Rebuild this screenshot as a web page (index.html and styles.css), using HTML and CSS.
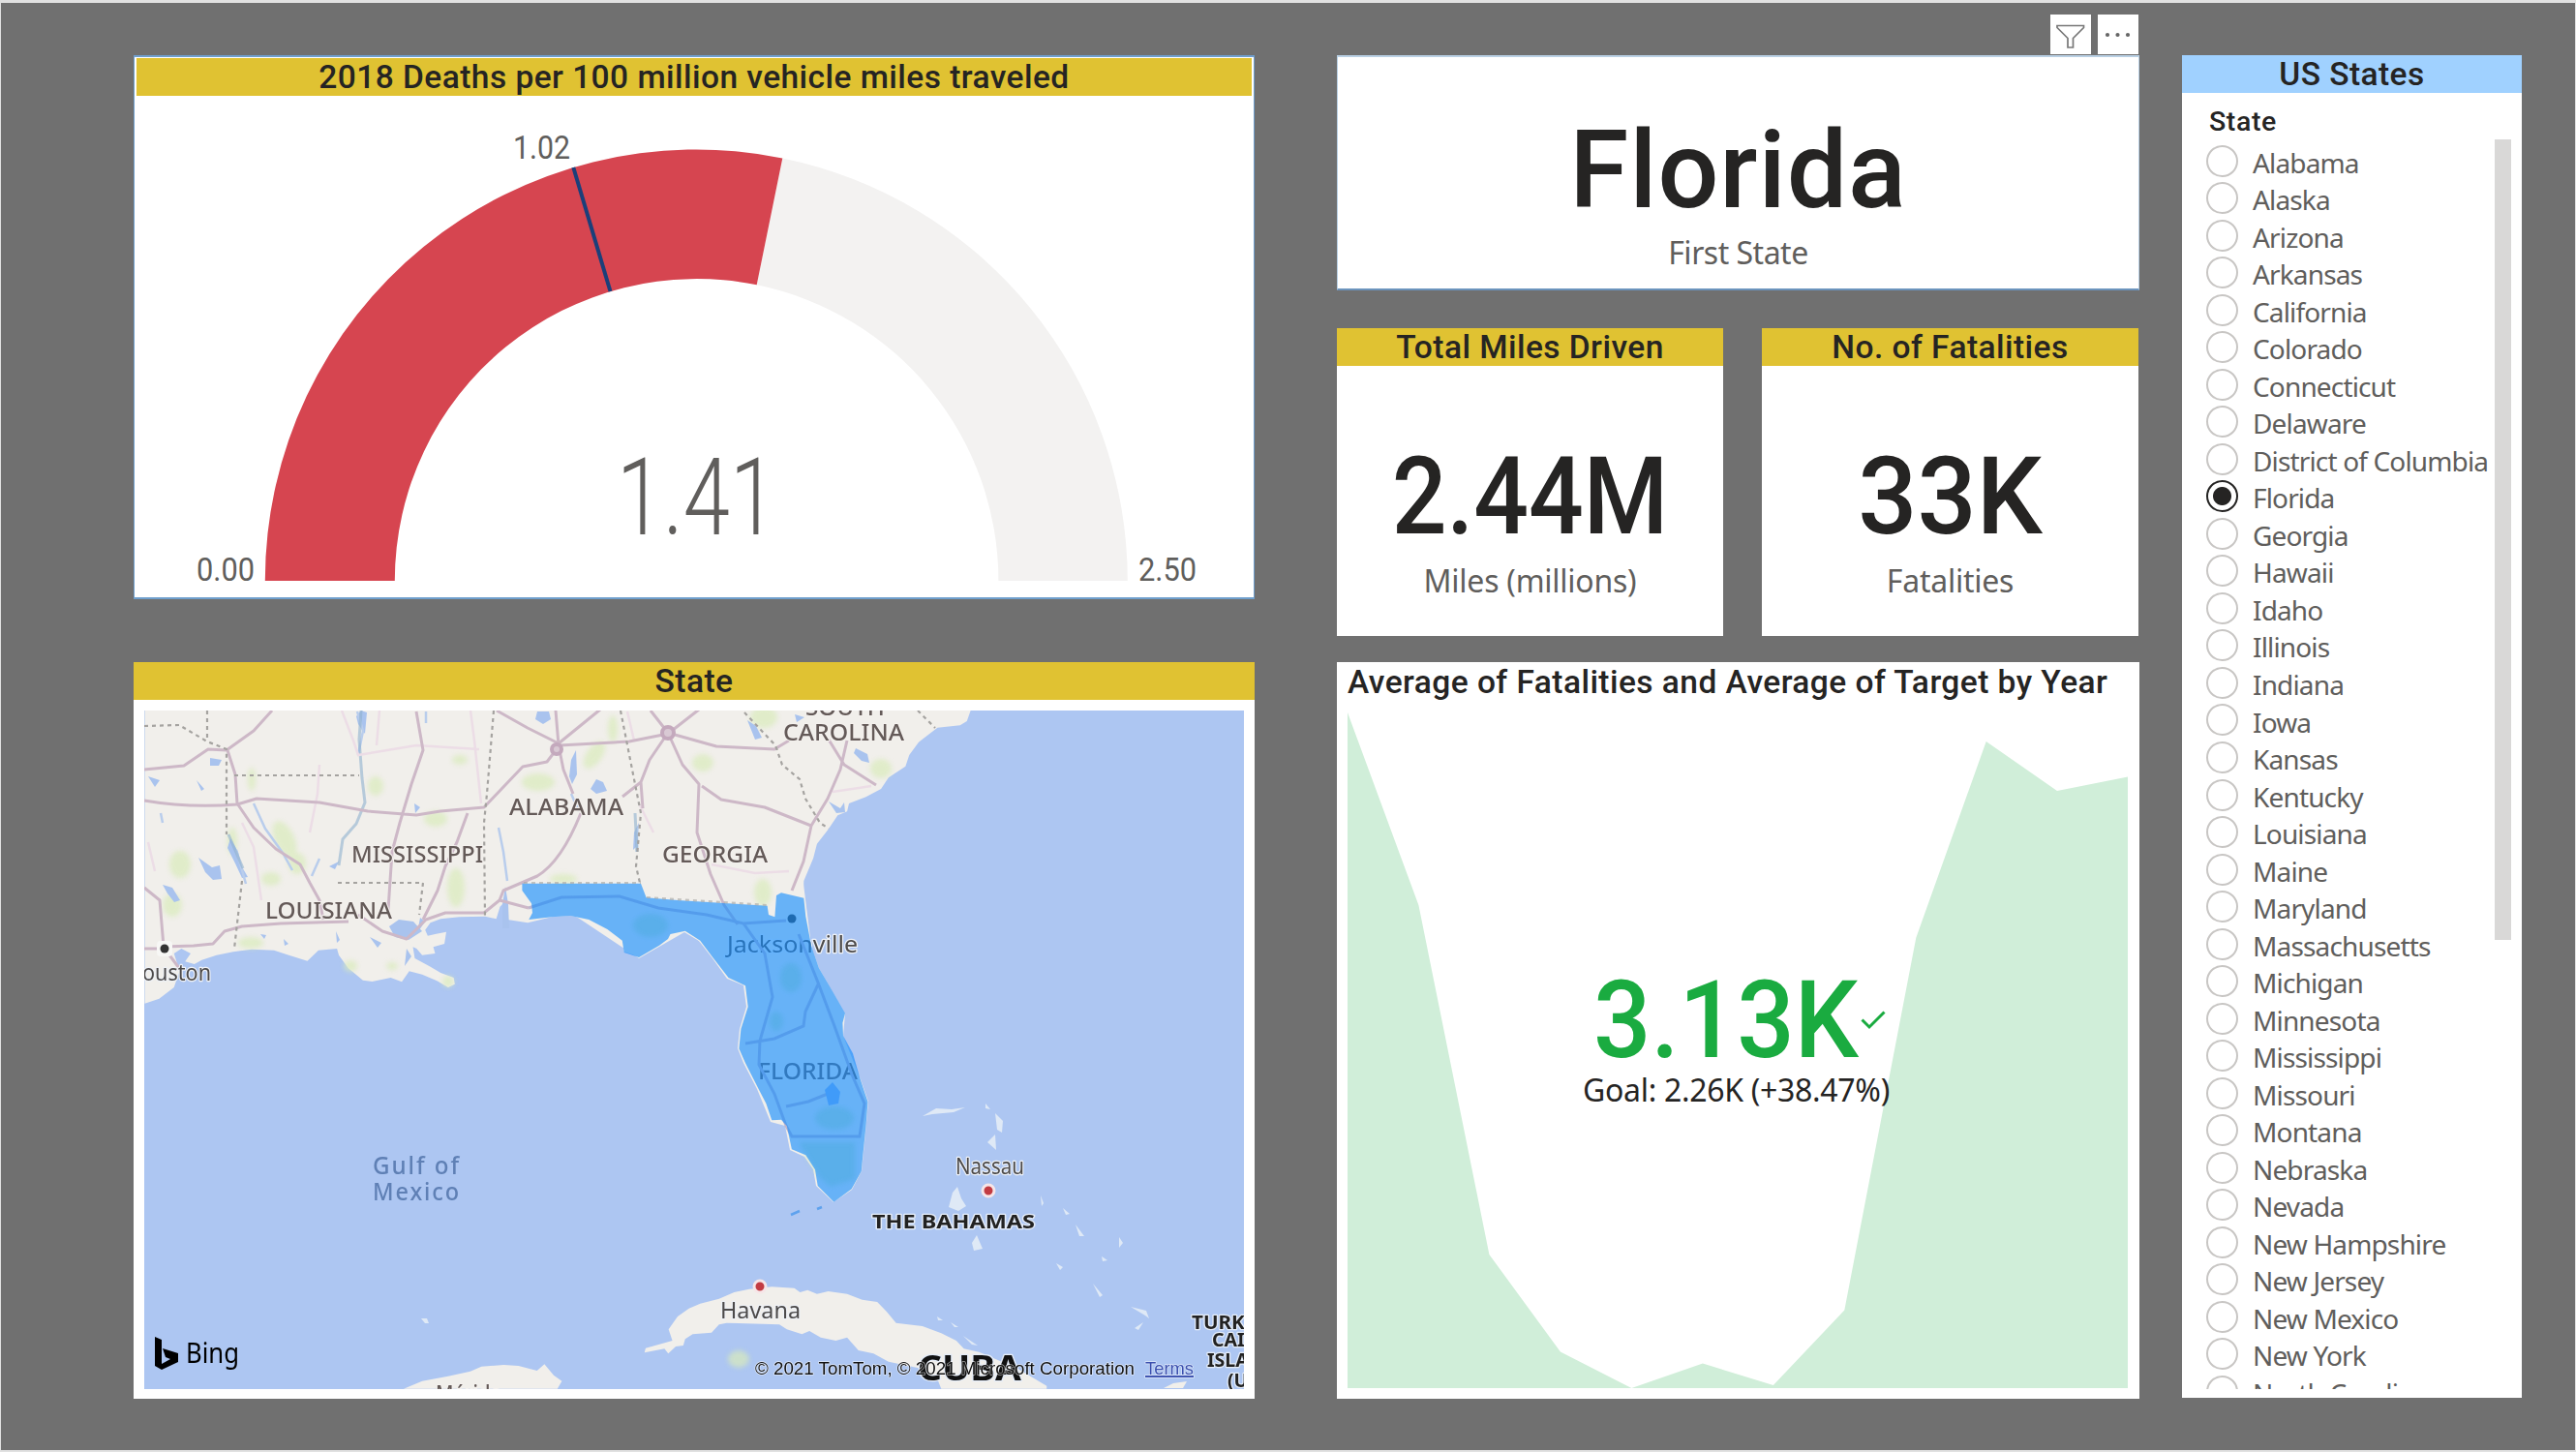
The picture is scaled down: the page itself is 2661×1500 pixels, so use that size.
FILE: index.html
```html
<!DOCTYPE html>
<html lang="en">
<head>
<meta charset="utf-8">
<title>US Traffic Fatalities</title>
<link rel="stylesheet" href="styles.css">
</head>
<body>
<main class="report">
  <div class="col col-left">
    <section class="panel gauge selected">
      <h2 class="band din">2018 Deaths per 100 million vehicle miles traveled</h2>
      <svg class="gauge-chart" viewBox="141 99 1152 517" width="1152" height="517">
        <path fill="#f3f2f1" d="M808.3 163.5A445.5 445.5 0 0 1 1164.8 600H1031.4A312 312 0 0 0 781.7 294.3Z"/>
        <path fill="#d64550" d="M273.8 600A445.5 445.5 0 0 1 808.3 163.5L781.7 294.3A312 312 0 0 0 407.8 600Z"/>
        <path stroke="#1b3f7a" stroke-width="4" d="M592.3 173L630.5 301"/>
        <g class="gauge-label">
          <text x="530" y="164" textLength="59" lengthAdjust="spacingAndGlyphs">1.02</text>
          <text x="203" y="600" textLength="60" lengthAdjust="spacingAndGlyphs">0.00</text>
          <text x="1176" y="600" textLength="60" lengthAdjust="spacingAndGlyphs">2.50</text>
        </g>
        <text class="gauge-value" x="637" y="552" textLength="165" lengthAdjust="spacingAndGlyphs">1.41</text>
      </svg>
    </section>
    <section class="panel map">
      <h2 class="band din">State</h2>
      <svg class="map-view" viewBox="149 734 1136 701" width="1136" height="701">
        <defs><filter id="soft"><feGaussianBlur stdDeviation="2.5"/></filter></defs>
        <rect x="149" y="734" width="1136" height="701" fill="#adc6f2"/>
        <g fill="#f1efeb">
          <!-- Gulf coast -->
          <path transform="translate(130 670) scale(.38265 .33333)" d="M51 192H1700V900L1568 930 1520 875 1470 885 1440 920 1385 955 1345 940 1340 905 1300 870 1250 840 1200 828 1150 832 1085 850 1030 840 1022 785 1010 800 1000 838 970 830 900 832 850 838 822 850 808 872 815 890 835 885 865 878 860 915 830 925 835 945 800 950 785 930 775 925 780 960 820 985 850 1005 885 1020 888 1040 870 1050 840 1030 800 1010 765 1000 745 1033 715 1020 665 1032 640 1028 600 990 575 950 570 930 520 935 490 968 440 950 400 935 340 932 290 940 245 950 205 965 185 978 160 970 175 945 150 930 130 945 145 1000 130 1050 90 1085 51 1100Z"/>
          <!-- Atlantic coast -->
          <path transform="translate(700 670) scale(.38903 .33333)" d="M-100 192H778L768 225 750 238 690 245 640 290 615 330 605 365 560 400 540 435 500 460 455 480 450 505 425 517 400 560 370 605 360 650 335 720 332 800H-100Z"/>
          <path d="M539 913H830L838 977 846 1000 873 1047 871 1070 889 1115 897 1138 894 1170 890 1210 880 1229 861 1242 843 1225 840 1208 831 1195 816 1188 811 1163 796 1159 782 1125 768 1098 762 1083 764 1063 771 1040 768 1018 751 1011 736 990 722 972 707 963 660 990 600 950Z"/>
          <!-- Cuba and Yucatán -->
          <path transform="translate(700 1060) scale(.38903 .33333)" d="M0 900L30 875 60 860 110 845 150 825 190 815 250 808 310 812 325 825 345 818 370 830 400 822 450 830 490 848 530 855 555 885 580 920 650 930 700 952 740 975 760 1000 800 1010 900 1060 980 1115V1124H700L690 1095 640 1060 560 1040 520 1015 480 1005 450 965 420 975 380 965 350 945 330 955 290 940 270 925 130 920 110 925 90 950 40 955 20 970 15 990 -5 993 -25 1015 -35 1000 -88 1012 -85 998 -14 975 -24 940Z"/>
          <path transform="translate(130 1060) scale(.38265 .33333)" d="M750 1124L800 1100 870 1085 930 1070 960 1055 1020 1050 1060 1053 1110 1068 1130 1048 1155 1082 1177 1100 1165 1124Z"/>
          <path d="M1202 1434L1212 1429 1226 1427 1222 1434Z"/>
        </g>
        <!-- forests -->
        <g fill="#d9ebbb" filter="url(#soft)" opacity=".7">
          <ellipse cx="186" cy="893" rx="11" ry="14"/><ellipse cx="178" cy="935" rx="10" ry="12"/>
          <ellipse cx="294" cy="867" rx="10" ry="20" transform="rotate(-25 294 867)"/><ellipse cx="307" cy="892" rx="9" ry="11"/>
          <ellipse cx="280" cy="908" rx="10" ry="7"/><ellipse cx="259" cy="974" rx="13" ry="6"/>
          <ellipse cx="240" cy="869" rx="5" ry="14"/><ellipse cx="260" cy="805" rx="4" ry="12"/>
          <ellipse cx="388" cy="812" rx="8" ry="10"/><ellipse cx="450" cy="846" rx="12" ry="8"/>
          <ellipse cx="475" cy="785" rx="8" ry="5"/><ellipse cx="471" cy="917" rx="9" ry="20"/>
          <ellipse cx="556" cy="808" rx="17" ry="9"/><ellipse cx="614" cy="780" rx="8" ry="16" transform="rotate(35 614 780)"/>
          <ellipse cx="633" cy="753" rx="5" ry="14"/><ellipse cx="582" cy="908" rx="14" ry="5"/>
          <ellipse cx="726" cy="788" rx="11" ry="9"/><ellipse cx="789" cy="741" rx="14" ry="11"/>
          <ellipse cx="910" cy="794" rx="11" ry="10"/><ellipse cx="788" cy="922" rx="9" ry="14"/>
          <ellipse cx="362" cy="998" rx="7" ry="6"/><ellipse cx="463" cy="1014" rx="6" ry="6"/>
          <ellipse cx="763" cy="1404" rx="11" ry="9"/><ellipse cx="405" cy="998" rx="6" ry="4"/>
        </g>
        <!-- lakes and rivers -->
        <g fill="#a9c3ee">
          <path d="M402 957L412 950 427 952 436 962 422 971 408 968Z"/>
          <path d="M238 866l8 14 3 14 7 12-6 1-7-15-8-16z"/><path d="M205 886l14 10 8-2 2 14-9 1-8-8z"/>
          <path d="M168 914l10 3 8 13-6 2-7-9z"/><path d="M153 802l12 4-5 7z"/><path d="M217 783l12 2-3 6-9 0z"/>
          <path d="M555 735h12l2 8-8 5-8-5z"/><path d="M616 805l7 3 4 9-11 3-6-5z"/>
          <path d="M590 785l5-10 1 25-5 10-3-8z"/><path d="M368 740l5-6 6 2-2 22-7-10z"/>
          <path d="M884 773l12 6 2 9-8-2-8-8z"/><path d="M772 744l9 6 6 12-7 2z"/><path d="M856 828l12 7 4-6 1 10-9 1z"/>
          <path d="M519 934l3-18 3 18 1 25-7 0z"/><path d="M655 860l5-10-2 24-4 4z"/><path d="M434 948l5 4-8 12z"/>
          <path d="M347 962l4 9-3 3zM293 970l5 5-4 2zM269 965l6 1-2 4zM340 895l10-5-4 8zM420 980l5 8-7 10zM382 968l12 6-4 5zM821 738l10 3-8 5zM428 830l6 4-5 6zM203 806l8 9-3 2z"/>
          <path fill="none" stroke="#b9cdec" stroke-width="2.500" d="M369 735L375 755 370 780M262 830l12 26 18 25 10 18M330 887l-8 18M515 855l5 25 4 30M590 820l8 18M440 735v12M166 840l2 10M658 855v25M244 878l10 35"/>
          <path fill="none" stroke="#8fb0cf" stroke-width="3" opacity=".6" d="M373 734l-2 30 3 40 3 25-9 22-14 16-4 27M656 840l2 40M236 862l15 35"/>
        </g>
        <!-- minor roads -->
        <g class="minor">
          <path d="M353 734L365 765 370 780 400 775 430 770 495 774M392 734L389 770M486 734L490 765 497 830M660 830L675 860M250 850L262 875 270 930M320 860L328 820 330 790M648 735L655 765M735 893L780 902 815 900M860 818L900 812M160 900L153 870"/>
        </g>
        <!-- highways -->
        <g class="road">
          <path d="M149 795L190 791 215 774 234 775 262 755 281 734M235 775L243 800 245 830 262 855 285 877 310 893 320 912 330 930 334 950"/>
          <path d="M149 827Q195 835 245 831L265 825 330 829 380 838 430 842 455 838 500 834 520 813 540 792 565 787 578 770 650 766 690 758 722 733M430 735L437 775 425 810 413 850 405 880 401 940M483 840L472 870 460 895 452 920 437 950"/>
          <path d="M513 734L545 752 577 768 620 733M574 734L577 770 582 795 592 820M600 840Q580 890 555 905L520 920 516 930 500 943 460 943 440 950 420 970 395 962 370 945M516 930L546 938"/>
          <path d="M672 734L690 757 671 785 662 808 643 823M690 757L705 790 722 810 720 860 734 903 748 935 762 955M725 812L745 826 790 834 838 853M690 757L740 771 800 774 815 765M662 808L664 835M856 764L872 790 905 811M875 765L868 795 855 825 838 853 830 890 818 920M149 917L165 930 169 978 200 977 220 975 232 962 250 957 290 954 360 952M149 980H170L185 1000"/>
        </g>
        <circle class="knot" cx="690" cy="757" r="6"/><circle class="knot" cx="575" cy="774" r="5"/>
        <!-- state lines -->
        <path class="border" d="M149 750L185 749 214 766 234 774V862M214 734V766M242 801H371M349 912H437L433 945M510 734L503 820 500 850 501 948M641 734L656 810 662 840 657 895 661 912M250 910L242 980M769 736L801 770 808 790 826 805 832 825 847 850 856 856M948 734L966 752"/>
        <g class="state-name">
          <text x="526" y="842" textLength="118" lengthAdjust="spacingAndGlyphs">ALABAMA</text>
          <text x="363" y="891" textLength="136" lengthAdjust="spacingAndGlyphs">MISSISSIPPI</text>
          <text x="274" y="949" textLength="131" lengthAdjust="spacingAndGlyphs">LOUISIANA</text>
          <text x="684" y="891" textLength="109" lengthAdjust="spacingAndGlyphs">GEORGIA</text>
          <text x="832" y="739" textLength="82" lengthAdjust="spacingAndGlyphs">SOUTH</text>
          <text x="809" y="765" textLength="125" lengthAdjust="spacingAndGlyphs">CAROLINA</text>
          <text x="783" y="1115" textLength="103" lengthAdjust="spacingAndGlyphs">FLORIDA</text>
          <text x="450" y="1448" textLength="68" lengthAdjust="spacingAndGlyphs">Mérida</text>
        </g>
        <g class="city">
          <text x="131" y="1013" textLength="87" lengthAdjust="spacingAndGlyphs">Houston</text>
          <text x="751" y="984" textLength="135" lengthAdjust="spacingAndGlyphs">Jacksonville</text>
          <text x="987" y="1213" textLength="71" lengthAdjust="spacingAndGlyphs">Nassau</text>
          <text x="744" y="1362" textLength="83" lengthAdjust="spacingAndGlyphs">Havana</text>
        </g>
        <rect x="162" y="972" width="16" height="16" rx="4" fill="#f7f7f5"/><circle cx="170" cy="980" r="4.5" fill="#333"/>
        <circle cx="818" cy="949" r="4.5" fill="#333"/>
        <!-- Florida highlight -->
        <g class="fl-road"><path d="M546 938L580 927 640 926 680 938 730 945 768 954 812 951M768 954L790 985 798 1030 785 1075 784 1100 800 1130 812 1163 818 1174H888L893 1140 880 1110 862 1060 845 1015 825 965M846 1015L832 1045 830 1060 800 1073 770 1078M812 1143L835 1138 855 1130"/></g>
        <g fill="#b7e0b0" filter="url(#soft)" opacity=".6"><path d="M825 1180h58v38l-25 8-12-10z"/><ellipse cx="817" cy="1010" rx="11" ry="15"/><ellipse cx="672" cy="956" rx="18" ry="12"/><ellipse cx="862" cy="1155" rx="20" ry="12"/><ellipse cx="802" cy="1055" rx="7" ry="10"/></g>
        <path fill="#8db3ee" d="M852 1126l8-8 8 10-2 12-10 2z"/>
        <path fill="#118dff" fill-opacity=".62" d="M539.4 912.7H662L667.6 927.3 700 930 792.6 935.7 794 945 800.4 947.3 802 925 807 922.3 830.3 927.7 832.3 946.7 838 976.7 845.9 1000 859.5 1023.3 873 1046.7 870.4 1056.7 871 1070 881 1088.3 888.7 1115 896.5 1138.3 894.5 1163.3 891.4 1193.3 889.8 1210 879.7 1228.3 861.4 1241.7 844.7 1225 842 1208.3 832.3 1193.3 817.9 1187.3 812.8 1163.3 807 1156.7 797.3 1157.3 791.4 1140 783.6 1125 770 1098.3 763.4 1083.3 765.4 1063 772.7 1040 770 1018.3 752.5 1010 737 990 723.3 971.7 707.8 961.7 692.5 965 690 970 681 976.7 660 989 644.7 984 642.8 971.7 627.4 960 608.3 950 589.2 946 570 947.3 546.3 950 550 943 549 933.3 539.4 920Z"/>
        <path class="border" stroke-opacity=".6" d="M541 912H662M668 927L792 935"/>
        <path stroke="#5ea2ee" stroke-width="2.5" d="M817 1255l9-4M844 1249l5-2"/>
        <!-- islands -->
        <g fill="#dfe9f6">
          <path d="M953 1153l14-8 16 1 14-2-12 5-22 2zM1018 1140l5 6-5-1zM1028 1150l8 8-1 12-5-3zM1020 1180l8-8 1 16zM984 1232l5-6 4 12 5 8-8 5-10-4zM1004 1284l5-8 6 14-9 2zM1075 1235l3 8-2 3zM1098 1248l7 6-4 1zM1111 1265l9 12-5 0zM1156 1278l4 6-4 5zM1091 1305l7 4-3 3zM1120 1308l9 18 10 12-3 2zM1138 1298l6 4-5 1zM1168 1350l16 4 3 8-4-3zM1181 1366l-5 8-4-2zM968 1360l6 4-5 0zM982 1366l8 5-4 0zM995 1380l15 10-6-1zM435 1362l6 0 2 5-4 0z"/>
        </g>
        <circle class="capital" cx="1021" cy="1230" r="6"/><circle class="capital" cx="785" cy="1329" r="6"/>
        <g class="sea"><text x="385" y="1213" textLength="91" lengthAdjust="spacingAndGlyphs">Gulf of</text><text x="385" y="1240" textLength="91" lengthAdjust="spacingAndGlyphs">Mexico</text></g>
        <g class="country">
          <text x="901" y="1269" textLength="168" lengthAdjust="spacingAndGlyphs">THE BAHAMAS</text>
          <text x="1231" y="1373" textLength="66" lengthAdjust="spacingAndGlyphs">TURKS</text><text x="1252" y="1391">CAICOS</text><text x="1247" y="1412">ISLANDS</text><text x="1268" y="1433">(U.K.)</text>
          <text class="cuba" x="948" y="1426" textLength="107" lengthAdjust="spacingAndGlyphs">CUBA</text>
        </g>
        <path d="M160 1381l7 3v25l9-5-5-2-3-9 16 5v9l-17 8-7-4z"/>
        <text class="bing" x="192" y="1408" textLength="55" lengthAdjust="spacingAndGlyphs">Bing</text>
        <g class="credits"><text x="780" y="1420" textLength="392" lengthAdjust="spacingAndGlyphs">© 2021 TomTom, © 2021 Microsoft Corporation</text><text class="terms" x="1183" y="1420" textLength="50" lengthAdjust="spacingAndGlyphs">Terms</text></g>
      </svg>
    </section>
  </div>

  <div class="col col-mid">
    <section class="panel card selected state-card">
      <div class="toolbar">
        <span class="tool"><svg width="42" height="40" viewBox="0 0 42 40"><path d="M7 11.500H34.500V13.500L23.500 24.500V34H18V24.500L7 13.500Z" fill="none" stroke="#777" stroke-width="1.700"/></svg></span>
        <span class="tool"><svg width="42" height="40" viewBox="0 0 42 40"><g fill="#666"><circle cx="10" cy="21" r="2.100"/><circle cx="20.500" cy="21" r="2.100"/><circle cx="31" cy="21" r="2.100"/></g></svg></span>
      </div>
      <div class="value din">Florida</div>
      <div class="caption">First State</div>
    </section>
    <div class="pair">
      <section class="panel card stat miles">
        <h2 class="band din">Total Miles Driven</h2>
        <div class="value din">2.44M</div>
        <div class="caption">Miles (millions)</div>
      </section>
      <section class="panel card stat deaths">
        <h2 class="band din">No. of Fatalities</h2>
        <div class="value din">33K</div>
        <div class="caption">Fatalities</div>
      </section>
    </div>
    <section class="panel kpi">
      <h2 class="kpi-title din">Average of Fatalities and Average of Target by Year</h2>
      <div class="kpi-body">
        <svg class="kpi-area" viewBox="1392 734 806 700" width="806" height="700"><path fill="#d0eed9" d="M1392 1434V736L1465.400 935 1538.400 1296 1611.900 1396.500 1685.400 1434 1758.900 1408.500 1831.800 1431 1905.300 1353.600 1979.300 968.700 2051.700 766 2125 817 2198 802.500V1434Z"/></svg>
        <div class="kpi-text">
          <div class="kpi-row"><span class="kpi-value din">3.13K</span><svg class="check" width="26" height="20" viewBox="0 0 26 20"><path d="M1.500 9.500L9 17 24.500 1.500" fill="none" stroke="#1aab40" stroke-width="3"/></svg></div>
          <div class="goal">Goal: 2.26K (+38.47%)</div>
        </div>
      </div>
    </section>
  </div>

  <aside class="panel slicer">
    <h2 class="band din">US States</h2>
    <div class="slicer-head din">State</div>
    <div class="slicer-body">
      <ul class="states">
        <li>Alabama</li><li>Alaska</li><li>Arizona</li><li>Arkansas</li><li>California</li><li>Colorado</li><li>Connecticut</li><li>Delaware</li><li>District of Columbia</li><li class="on">Florida</li><li>Georgia</li><li>Hawaii</li><li>Idaho</li><li>Illinois</li><li>Indiana</li><li>Iowa</li><li>Kansas</li><li>Kentucky</li><li>Louisiana</li><li>Maine</li><li>Maryland</li><li>Massachusetts</li><li>Michigan</li><li>Minnesota</li><li>Mississippi</li><li>Missouri</li><li>Montana</li><li>Nebraska</li><li>Nevada</li><li>New Hampshire</li><li>New Jersey</li><li>New Mexico</li><li>New York</li><li>North Carolina</li>
      </ul>
      <div class="thumb"></div>
    </div>
  </aside>
</main>
</body>
</html>
```
FILE: styles.css
```css
* { box-sizing: border-box; }
body { margin: 0; font-family: "Noto Sans", "Open Sans", sans-serif; color: #252423; }
h2, ul { margin: 0; padding: 0; font-weight: inherit; }
svg { display: block; }

.report {
  display: flex;
  width: 2661px;
  height: 1500px;
  padding: 54px 0 0 137px;
  background: #707070;
  border: 1px solid #e1e1e1;
  border-top-width: 3px;
  border-bottom-width: 2px;
  overflow: hidden;
}
.col { display: flex; flex-direction: column; }
.col-left { width: 1158px; gap: 65px; margin-right: 85px; }
.col-mid { width: 829px; margin-right: 44px; }
.panel { background: #fff; }
.din { font-family: Roboto, sans-serif; }
.band {
  height: 39px;
  line-height: 40px;
  background: #e0c232;
  text-align: center;
  font-size: 33.5px;
  font-weight: 500;
  letter-spacing: .45px;
  white-space: nowrap;
}
.selected { border: 1px solid #6f9fcd; }

.gauge { height: 562px; padding: 1px 2px 0; border-width: 2px 1px; }
.gauge-label { font: 33px Roboto, sans-serif; fill: #605e5c; }
.gauge-value { font: 300 111px Roboto, sans-serif; fill: #605e5c; }

.map { height: 761px; }
.map-view { margin: 11px 0 0 11px; }
.road path { fill: none; stroke: #cdb8c7; stroke-width: 3; stroke-linejoin: round; }
.minor path { fill: none; stroke: #ecdde6; stroke-width: 2.5; }
.knot { fill: #d9c9d4; stroke: #c4a9bd; stroke-width: 4; }
.fl-road path { fill: none; stroke: #bfb6cc; stroke-width: 3; }
.border { fill: none; stroke: #a5a3a0; stroke-width: 2.2; stroke-dasharray: 4 4; }
.map-view text { paint-order: stroke; stroke-linejoin: round; }
.state-name { font: 500 23px "Noto Sans", sans-serif; fill: #645a58; stroke: #f4f1ee; stroke-width: 2px; }
.city { font: 24px "Noto Sans", sans-serif; fill: #4c4a4a; stroke: #eef1f6; stroke-width: 2.5px; }
.sea { font: 500 25px "Noto Sans", sans-serif; fill: #5f80b5; letter-spacing: 2px; }
.country { font: 700 19.5px "Noto Sans", sans-serif; fill: #222; stroke: #e4ecf8; stroke-width: 2.5px; }
.cuba { font-size: 35px; fill: #111; }
.bing { font: 29px "Noto Sans", sans-serif; }
.credits { font: 19px "Liberation Sans", Arial, sans-serif; fill: #111; stroke: #fff; stroke-opacity: .6; stroke-width: 1.5px; }
.terms { fill: #3a4fae; text-decoration: underline; }
.capital { fill: #c23b42; stroke: #f6e6e8; stroke-width: 3; }

.card { display: flex; flex-direction: column; text-align: center; }
.state-card { position: relative; height: 243px; border-width: 2px 1px; border-color: #b9d0e4 #b9d0e4 #6c94bd; padding-top: 62px; }
.toolbar { position: absolute; right: 0; top: -44px; display: flex; gap: 7px; }
.tool { width: 42px; height: 41px; background: #fff; }
.value { font-size: 111px; font-weight: 500; line-height: 111px; white-space: nowrap; }
.caption { font-size: 32px; line-height: 44px; color: #605e5c; letter-spacing: -.5px; }
.state-card .value { letter-spacing: .9px; }
.state-card .caption { margin-top: 7px; }
.pair { display: flex; gap: 40px; margin-top: 39px; }
.stat { height: 318px; }
.miles { width: 399px; }
.deaths { width: 389px; }
.stat .value { margin-top: 80px; }
.miles .value { transform: scaleX(.9); }
.deaths .value { transform: scaleX(.97); }
.stat .caption { margin-top: 9px; letter-spacing: -.25px; }

.kpi { height: 761px; margin-top: 27px; padding: 0 11px; }
.kpi-title { height: 50px; line-height: 42px; font-size: 33.5px; font-weight: 500; letter-spacing: .45px; white-space: nowrap; }
.kpi-body { display: grid; width: 806px; height: 700px; }
.kpi-area, .kpi-text { grid-area: 1 / 1; }
.kpi-text { padding-top: 264px; }
.kpi-row { display: flex; align-items: center; padding-left: 254px; gap: 2px; }
.kpi-value { margin-right: -19px; font-size: 112px; line-height: 112px; font-weight: 500; color: #1aab40; transform: scaleX(.935); transform-origin: left; }
.goal { margin-top: -4px; padding-left: 243px; font-size: 32px; line-height: 40px; letter-spacing: -.3px; }

.slicer { width: 351px; height: 1387px; }
.slicer .band { background: #a0d1ff; }
.slicer-head { padding-left: 28px; height: 48px; line-height: 59px; font-size: 28.5px; font-weight: 500; letter-spacing: .6px; }
.slicer-body { display: flex; height: 1291px; }
.states { width: 323px; height: 1291px; overflow: hidden; padding: 4px 0 0 25px; list-style: none; }
.states li { display: flex; align-items: center; gap: 15px; height: 38.53px; padding-top: 1px; font-size: 28px; line-height: 38px; color: #605e5c; letter-spacing: -.85px; white-space: nowrap; }
.states li::before { content: ""; width: 29px; height: 29px; border: 2px solid #c8c6c4; border-radius: 50%; flex: none; margin-top: -3px; }
.states .on::before { border-color: #252423; background: radial-gradient(circle, #252423 0 9px, #fff 10px); }
.thumb { width: 17px; height: 827px; background: #d9d8d7; }
```
